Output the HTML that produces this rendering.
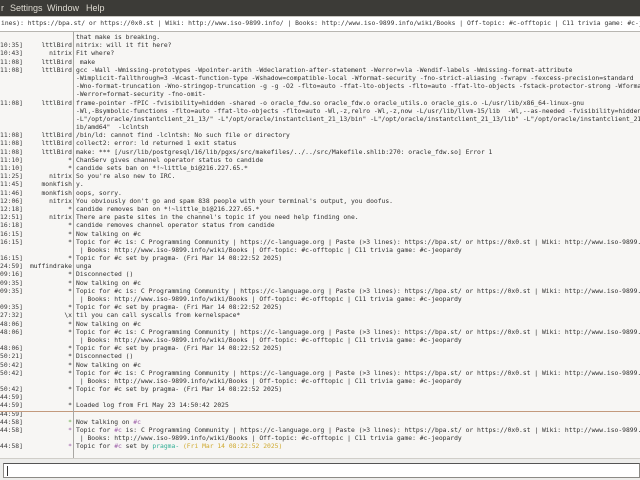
<!DOCTYPE html>
<html><head><meta charset="utf-8"><style>
*{margin:0;padding:0;box-sizing:border-box}
body{width:640px;height:480px;overflow:hidden;background:#ededeb;position:relative;font-family:"DejaVu Sans Mono","Liberation Mono",monospace;}
#menu{position:absolute;left:0;top:0;width:640px;height:16px;background:#3c3b37;color:#dfdbd2;font:9px "Liberation Sans",sans-serif;}
#menu span{position:absolute;top:3px}
#topic{position:absolute;left:0;top:16px;width:640px;height:16px;background:#fff;border-bottom:1px solid #b8b6b1;border-top:1px solid #c8c6c1;font-size:6.35px;line-height:14px;color:#333;white-space:pre;overflow:hidden;padding-left:1px}
#chat{position:absolute;left:0;top:32px;width:640px;height:427px;background:#f7f6f4;overflow:hidden;border-bottom:1px solid #d0cec9}
#sep{position:absolute;left:73px;top:0;width:1px;height:427px;background:#a9a7a3}
#lines{position:absolute;left:0;top:2px;width:640px}
.l{position:relative;height:8.2px;white-space:pre;font-size:6.35px;line-height:8.2px;color:#2e2e2e}
.t{position:absolute;left:-3.8px;color:#3a3a3a}
.n{position:absolute;left:0;width:72px;text-align:right}
.m{position:absolute;left:76px}
#mark{position:absolute;left:0;top:379px;width:640px;height:1px;background:#c39a7d}
#input{position:absolute;left:3px;top:463px;width:637px;height:15px;background:#fff;border:1px solid #8c8a86;border-top:1.5px solid #555}
#input i{position:absolute;left:3px;top:2px;width:1px;height:10px;background:#333}
.g{color:#6cae4a}.p{color:#9c5ea8}.c{color:#2fae94}.y{color:#cfa92e}
</style></head><body>
<div id="menu"><span style="left:1px">r</span><span style="left:10px">Settings</span><span style="left:47px">Window</span><span style="left:86px">Help</span></div>
<div id="topic">ines): https://bpa.st/ or https://0x0.st | Wiki: http://www.iso-9899.info/ | Books: http://www.iso-9899.info/wiki/Books | Off-topic: #c-offtopic | C11 trivia game: #c-jeopardy</div>
<div id="chat">
<div id="lines">
<div class="l"><span class="m">that make is breaking.</span></div>
<div class="l"><span class="t">[10:35]</span><span class="n">lttlBird</span><span class="m">nitrix: will it fit here?</span></div>
<div class="l"><span class="t">[10:43]</span><span class="n">nitrix</span><span class="m">Fit where?</span></div>
<div class="l"><span class="t">[11:08]</span><span class="n">lttlBird</span><span class="m"> make</span></div>
<div class="l"><span class="t">[11:08]</span><span class="n">lttlBird</span><span class="m">gcc -Wall -Wmissing-prototypes -Wpointer-arith -Wdeclaration-after-statement -Werror=vla -Wendif-labels -Wmissing-format-attribute</span></div>
<div class="l"><span class="m">-Wimplicit-fallthrough=3 -Wcast-function-type -Wshadow=compatible-local -Wformat-security -fno-strict-aliasing -fwrapv -fexcess-precision=standard</span></div>
<div class="l"><span class="m">-Wno-format-truncation -Wno-stringop-truncation -g -g -O2 -flto=auto -ffat-lto-objects -flto=auto -ffat-lto-objects -fstack-protector-strong -Wformat</span></div>
<div class="l"><span class="m">-Werror=format-security -fno-omit-</span></div>
<div class="l"><span class="t">[11:08]</span><span class="n">lttlBird</span><span class="m">frame-pointer -fPIC -fvisibility=hidden -shared -o oracle_fdw.so oracle_fdw.o oracle_utils.o oracle_gis.o -L/usr/lib/x86_64-linux-gnu</span></div>
<div class="l"><span class="m">-Wl,-Bsymbolic-functions -flto=auto -ffat-lto-objects -flto=auto -Wl,-z,relro -Wl,-z,now -L/usr/lib/llvm-15/lib  -Wl,--as-needed -fvisibility=hidden</span></div>
<div class="l"><span class="m">-L"/opt/oracle/instantclient_21_13/" -L"/opt/oracle/instantclient_21_13/bin" -L"/opt/oracle/instantclient_21_13/lib" -L"/opt/oracle/instantclient_21_13/sdk/l</span></div>
<div class="l"><span class="m">ib/amd64"  -lclntsh</span></div>
<div class="l"><span class="t">[11:08]</span><span class="n">lttlBird</span><span class="m">/bin/ld: cannot find -lclntsh: No such file or directory</span></div>
<div class="l"><span class="t">[11:08]</span><span class="n">lttlBird</span><span class="m">collect2: error: ld returned 1 exit status</span></div>
<div class="l"><span class="t">[11:08]</span><span class="n">lttlBird</span><span class="m">make: *** [/usr/lib/postgresql/16/lib/pgxs/src/makefiles/../../src/Makefile.shlib:270: oracle_fdw.so] Error 1</span></div>
<div class="l"><span class="t">[11:10]</span><span class="n">*</span><span class="m">ChanServ gives channel operator status to candide</span></div>
<div class="l"><span class="t">[11:10]</span><span class="n">*</span><span class="m">candide sets ban on *!~little_bi@216.227.65.*</span></div>
<div class="l"><span class="t">[11:25]</span><span class="n">nitrix</span><span class="m">So you're also new to IRC.</span></div>
<div class="l"><span class="t">[11:45]</span><span class="n">monkfish</span><span class="m">y.</span></div>
<div class="l"><span class="t">[11:46]</span><span class="n">monkfish</span><span class="m">oops, sorry.</span></div>
<div class="l"><span class="t">[12:06]</span><span class="n">nitrix</span><span class="m">You obviously don't go and spam 838 people with your terminal's output, you doofus.</span></div>
<div class="l"><span class="t">[12:18]</span><span class="n">*</span><span class="m">candide removes ban on *!~little_bi@216.227.65.*</span></div>
<div class="l"><span class="t">[12:51]</span><span class="n">nitrix</span><span class="m">There are paste sites in the channel's topic if you need help finding one.</span></div>
<div class="l"><span class="t">[16:18]</span><span class="n">*</span><span class="m">candide removes channel operator status from candide</span></div>
<div class="l"><span class="t">[16:15]</span><span class="n">*</span><span class="m">Now talking on #c</span></div>
<div class="l"><span class="t">[16:15]</span><span class="n">*</span><span class="m">Topic for #c is: C Programming Community | https://c-language.org | Paste (&gt;3 lines): https://bpa.st/ or https://0x0.st | Wiki: http://www.iso-9899.info/</span></div>
<div class="l"><span class="m"> | Books: http://www.iso-9899.info/wiki/Books | Off-topic: #c-offtopic | C11 trivia game: #c-jeopardy</span></div>
<div class="l"><span class="t">[16:15]</span><span class="n">*</span><span class="m">Topic for #c set by pragma- (Fri Mar 14 08:22:52 2025)</span></div>
<div class="l"><span class="t">[24:59]</span><span class="n">muffindrake</span><span class="m">unga</span></div>
<div class="l"><span class="t">[09:16]</span><span class="n">*</span><span class="m">Disconnected ()</span></div>
<div class="l"><span class="t">[09:35]</span><span class="n">*</span><span class="m">Now talking on #c</span></div>
<div class="l"><span class="t">[09:35]</span><span class="n">*</span><span class="m">Topic for #c is: C Programming Community | https://c-language.org | Paste (&gt;3 lines): https://bpa.st/ or https://0x0.st | Wiki: http://www.iso-9899.info/</span></div>
<div class="l"><span class="m"> | Books: http://www.iso-9899.info/wiki/Books | Off-topic: #c-offtopic | C11 trivia game: #c-jeopardy</span></div>
<div class="l"><span class="t">[09:35]</span><span class="n">*</span><span class="m">Topic for #c set by pragma- (Fri Mar 14 08:22:52 2025)</span></div>
<div class="l"><span class="t">[27:32]</span><span class="n">\x</span><span class="m">til you can call syscalls from kernelspace*</span></div>
<div class="l"><span class="t">[48:06]</span><span class="n">*</span><span class="m">Now talking on #c</span></div>
<div class="l"><span class="t">[48:06]</span><span class="n">*</span><span class="m">Topic for #c is: C Programming Community | https://c-language.org | Paste (&gt;3 lines): https://bpa.st/ or https://0x0.st | Wiki: http://www.iso-9899.info/</span></div>
<div class="l"><span class="m"> | Books: http://www.iso-9899.info/wiki/Books | Off-topic: #c-offtopic | C11 trivia game: #c-jeopardy</span></div>
<div class="l"><span class="t">[48:06]</span><span class="n">*</span><span class="m">Topic for #c set by pragma- (Fri Mar 14 08:22:52 2025)</span></div>
<div class="l"><span class="t">[50:21]</span><span class="n">*</span><span class="m">Disconnected ()</span></div>
<div class="l"><span class="t">[50:42]</span><span class="n">*</span><span class="m">Now talking on #c</span></div>
<div class="l"><span class="t">[50:42]</span><span class="n">*</span><span class="m">Topic for #c is: C Programming Community | https://c-language.org | Paste (&gt;3 lines): https://bpa.st/ or https://0x0.st | Wiki: http://www.iso-9899.info/</span></div>
<div class="l"><span class="m"> | Books: http://www.iso-9899.info/wiki/Books | Off-topic: #c-offtopic | C11 trivia game: #c-jeopardy</span></div>
<div class="l"><span class="t">[50:42]</span><span class="n">*</span><span class="m">Topic for #c set by pragma- (Fri Mar 14 08:22:52 2025)</span></div>
<div class="l"><span class="t">[44:59]</span></div>
<div class="l"><span class="t">[44:59]</span><span class="n">*</span><span class="m">Loaded log from Fri May 23 14:50:42 2025</span></div>
<div class="l"><span class="t">[44:59]</span></div>
<div class="l"><span class="t">[44:58]</span><span class="n g">*</span><span class="m">Now talking on <span class="p">#c</span></span></div>
<div class="l"><span class="t">[44:58]</span><span class="n p">*</span><span class="m">Topic for <span class="p">#c</span> is: C Programming Community | https://c-language.org | Paste (&gt;3 lines): https://bpa.st/ or https://0x0.st | Wiki: http://www.iso-9899.info/</span></div>
<div class="l"><span class="m"> | Books: http://www.iso-9899.info/wiki/Books | Off-topic: #c-offtopic | C11 trivia game: #c-jeopardy</span></div>
<div class="l"><span class="t">[44:58]</span><span class="n p">*</span><span class="m">Topic for <span class="p">#c</span> set by <span class="c">pragma-</span> <span class="y">(Fri Mar 14 08:22:52 2025)</span></span></div>
</div>
<div id="mark"></div>
<div id="sep"></div>
</div>
<div id="input"><i></i></div>
</body></html>
